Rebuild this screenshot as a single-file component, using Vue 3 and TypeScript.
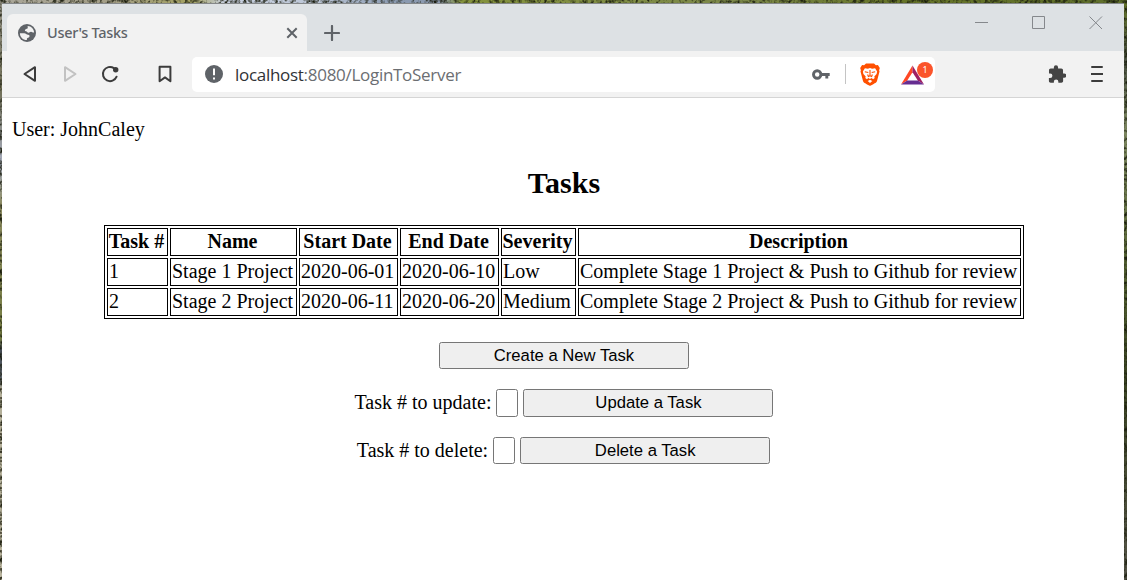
<script setup lang="ts">
interface Task {
  id: number
  name: string
  start: string
  end: string
  severity: string
  description: string
}

const headers: string[] = ['Task #', 'Name', 'Start Date', 'End Date', 'Severity', 'Description']

const tasks: Task[] = [
  { id: 1, name: 'Stage 1 Project', start: '2020-06-01', end: '2020-06-10', severity: 'Low', description: 'Complete Stage 1 Project & Push to Github for review' },
  { id: 2, name: 'Stage 2 Project', start: '2020-06-11', end: '2020-06-20', severity: 'Medium', description: 'Complete Stage 2 Project & Push to Github for review' },
]
</script>

<template>
  <div class="desktop">
    <svg class="wallpaper" width="1127" height="580" aria-hidden="true">
      <defs>
        <linearGradient id="top-tone" x1="0" y1="0" x2="1" y2="0">
          <stop offset="0" stop-color="#a9a69a" />
          <stop offset="0.1" stop-color="#a39e86" />
          <stop offset="0.17" stop-color="#a3a162" />
          <stop offset="0.2" stop-color="#c8d0df" />
          <stop offset="0.28" stop-color="#bcc6d6" />
          <stop offset="0.35" stop-color="#8999b0" />
          <stop offset="0.39" stop-color="#8c9ab0" />
          <stop offset="0.41" stop-color="#84923c" />
          <stop offset="0.65" stop-color="#7c884a" />
          <stop offset="0.8" stop-color="#667428" />
          <stop offset="1" stop-color="#5e6e2c" />
        </linearGradient>
        <linearGradient id="left-tone" x1="0" y1="0" x2="0" y2="1">
          <stop offset="0" stop-color="#98968a" />
          <stop offset="0.15" stop-color="#6f6e56" />
          <stop offset="0.28" stop-color="#a8aebf" />
          <stop offset="0.35" stop-color="#8b8a60" />
          <stop offset="0.58" stop-color="#757d42" />
          <stop offset="0.6" stop-color="#464d56" />
          <stop offset="0.65" stop-color="#596068" />
          <stop offset="0.67" stop-color="#b2ae98" />
          <stop offset="1" stop-color="#bab59f" />
        </linearGradient>
        <linearGradient id="right-tone" x1="0" y1="0" x2="0" y2="1">
          <stop offset="0" stop-color="#607028" />
          <stop offset="0.1" stop-color="#4b5244" />
          <stop offset="0.22" stop-color="#7d8761" />
          <stop offset="0.45" stop-color="#566434" />
          <stop offset="0.65" stop-color="#3a4422" />
          <stop offset="1" stop-color="#545348" />
        </linearGradient>
        <filter id="grain" x="0" y="0" width="1127" height="580" filterUnits="userSpaceOnUse" color-interpolation-filters="sRGB">
          <feTurbulence type="fractalNoise" baseFrequency="0.32 0.28" numOctaves="2" seed="8" />
          <feColorMatrix values="0 0 0 0 0.1  0 0 0 0 0.11  0 0 0 0 0.05  2.6 0 0 0 -1.1" />
        </filter>
      </defs>
      <rect width="1127" height="4" fill="url(#top-tone)" />
      <rect y="3" width="3" height="577" fill="url(#left-tone)" />
      <rect x="1123" y="3" width="4" height="577" fill="url(#right-tone)" />
      <path d="M1 388V580" stroke="#5f5b49" stroke-width="2" stroke-dasharray="2 7" />
      <rect width="1127" height="580" filter="url(#grain)" />
    </svg>

    <div class="window">
      <header class="titlebar">
        <div class="tab">
          <svg class="globe" viewBox="0 0 18 18">
            <circle cx="9" cy="9" r="9" fill="#5f6368" />
            <path d="M9.800 2C13.300 2.100 16 5.200 16.100 8.500c-1.300.2-2-.6-3-.7-1.300-.1-1.500 1.200-2.700 1-1.300-.2-1.100-1.600-2.500-1.600-1.100 0-1.300-1.200-.5-1.800.8-.7 2.200-.3 2.400-1.300.1-.8-.5-1.200 0-2.100z" fill="#f2f2f2" />
            <path d="M1.900 9.200h4.300c1.700 0 2.300 1.500 3.800 1.600 1.500 0 2 1.100 1.300 2.100-.6.900-1.900.4-2.300 1.500-.3.8.2 1.200-.2 1.700C4.900 16.100 1.900 12.900 1.900 9.200z" fill="#f2f2f2" />
          </svg>
          <span class="tab-title">User's Tasks</span>
          <svg class="tab-close" viewBox="0 0 12 12"><path d="M1.300 1.300l9.400 9.400M10.700 1.300l-9.400 9.400" /></svg>
        </div>
        <svg class="new-tab" viewBox="0 0 16 16"><path d="M8 1v14M1 8h14" /></svg>
        <div class="controls">
          <svg viewBox="0 0 14 14"><path d="M0 7.500h13" /></svg>
          <svg viewBox="0 0 14 14"><path d="M.5 1.500h12v12H.5z" /></svg>
          <svg viewBox="0 0 14 14"><path d="M.5 1.500l12.500 12.500M13 1.500L.5 14" /></svg>
        </div>
      </header>

      <nav class="toolbar">
        <svg class="back" viewBox="0 0 14 18"><path d="M12 2.200v13.600L1.500 9z" /></svg>
        <svg class="forward" viewBox="0 0 14 18"><path d="M2 2.200v13.600L12.500 9z" /></svg>
        <svg class="reload" viewBox="0 0 18 18">
          <path d="M15.600 11.700A7.100 7.100 0 1 1 12.900 3.100" />
          <circle cx="14.700" cy="4.700" r="2.700" />
        </svg>
        <svg class="bookmark" viewBox="0 0 14 18"><path d="M1.600 1.800h10.800v14.400L7 12.400l-5.400 3.800z" /></svg>

        <div class="address">
          <svg class="info" viewBox="0 0 18 18">
            <circle cx="9" cy="9" r="9" fill="#5f6368" />
            <path d="M9 3.600v6.600M9 12.600v2" stroke="#fff" stroke-width="2" />
          </svg>
          <span class="url"><b>localhost</b>:8080/LoginToServer</span>
          <svg class="key" viewBox="0 0 18 11">
            <circle cx="5.200" cy="5.500" r="3.700" />
            <path d="M8.700 5.500h9M14.800 5.500v4" />
          </svg>
          <i class="divider"></i>
          <svg class="lion" viewBox="0 0 20 23">
            <path d="M6 .5h8l1.900 1.700 2-.1L19.800 5l-.7 2.200.4 1.300-2.500 9.500c-.5 1.500-1.500 2-6.200 4.500q-.8.500-1.600 0C4.500 20 3.500 19.500 3 18L.5 8.500l.4-1.300L.2 5l1.900-2.900 2 .1z" fill="#ff5000" />
            <path d="M4.900 5.200l3 .5L10 5l2.100.7 3-.5 2 3.200-.5 2.600-2.300 2.500.4 1.400-1.600 1.300-1.500-1.300L10 16l-1.600-1.100-1.500 1.300-1.600-1.300.4-1.400L3.400 11l-.5-2.600z" fill="#fff" />
            <path d="M4.800 8.700l3.500.8M15.200 8.700l-3.500.8M10 7v5.500M7.600 11.500l.8 2L10 12.700l1.600.8.8-2" fill="none" stroke="#ff5000" stroke-width="1.100" />
            <path d="M10 16.800l2.300 1.300L10 20l-2.300-1.900z" fill="#fff" />
          </svg>
          <div class="rewards">
            <svg viewBox="0 0 24 20">
              <path d="M12 0v7.200L6.500 15.800 0 20z" fill="#ff4724" />
              <path d="M12 0l12 20-6.500-4.200L12 7.200z" fill="#9e1f63" />
              <path d="M0 20l6.500-4.200h11L24 20z" fill="#662d91" />
            </svg>
            <span class="badge">1</span>
          </div>
        </div>

        <svg class="puzzle" viewBox="0 0 20 20">
          <path d="M18 9.500h-1.300V5.900c0-1-.8-1.900-1.900-1.900h-3.600V2.700a2.300 2.300 0 0 0-4.700 0V4H3C2 4 1.100 4.900 1.100 5.900v3.500h1.300a2.500 2.500 0 0 1 0 5H1v3.500c0 1 .9 1.900 2 1.900h3.500v-1.300a2.500 2.500 0 0 1 5 0v1.300h3.400c1 0 1.900-.8 1.900-1.900v-3.700H18a2.300 2.300 0 0 0 0-4.700z" />
        </svg>
        <svg class="menu" viewBox="0 0 12 16"><path d="M1 1h10M0.500 8h11M1 15h10" /></svg>
      </nav>

      <main class="page">
        <p class="user">User: JohnCaley</p>
        <h2>Tasks</h2>
        <table>
          <colgroup><col class="c1" /><col class="c2" /><col class="c3" /><col class="c3" /><col class="c5" /><col class="c6" /></colgroup>
          <thead>
            <tr><th v-for="h in headers" :key="h">{{ h }}</th></tr>
          </thead>
          <tbody>
            <tr v-for="t in tasks" :key="t.id">
              <td>{{ t.id }}</td>
              <td>{{ t.name }}</td>
              <td>{{ t.start }}</td>
              <td>{{ t.end }}</td>
              <td>{{ t.severity }}</td>
              <td>{{ t.description }}</td>
            </tr>
          </tbody>
        </table>
        <div class="row create"><button>Create a New Task</button></div>
        <div class="row update"><label for="upd">Task # to update:</label><input id="upd" type="text" /><button>Update a Task</button></div>
        <div class="row delete"><label for="del">Task # to delete:</label><input id="del" type="text" /><button>Delete a Task</button></div>
      </main>
    </div>
  </div>
</template>

<style>
body { margin: 0; overflow: hidden; }
</style>

<style scoped>
* { box-sizing: border-box; }
.desktop { position: relative; width: 1127px; height: 580px; padding: 3px 3px 0 2px; overflow: hidden; }
.wallpaper { position: absolute; inset: 0; }
.window { position: relative; height: 577px; display: flex; flex-direction: column; background: #fff; border-top: 1px solid #85888a; }
svg { display: block; flex: none; fill: none; }

.titlebar { height: 47px; background: #dde1e4; display: flex; align-items: flex-start; padding-left: 5px; }
.tab { width: 300px; height: 37px; margin-top: 10px; padding: 0 9px 0 11px; border-radius: 6px 6px 0 0; background: #f2f2f2; display: flex; align-items: center; }
.globe { width: 18px; height: 18px; }
.tab-title { margin: -1px 0 0 11px; font: 500 14.500px/20px "Noto Sans", sans-serif; letter-spacing: -0.290px; color: #5f6368; white-space: nowrap; }
.tab-close { width: 12px; height: 12px; margin-left: auto; stroke: #5f6368; stroke-width: 2; }
.new-tab { width: 16px; height: 16px; margin: 21px 0 0 17px; stroke: #5f6368; stroke-width: 2.200; stroke-linecap: round; }
.controls { margin: 11px 21px 0 auto; display: flex; gap: 43px; }
.controls svg { width: 14px; height: 14px; stroke: #85888c; stroke-width: 1; overflow: visible; }

.toolbar { height: 47px; background: #f2f2f2; border-bottom: 1px solid #d5d5d5; display: flex; align-items: center; padding-left: 21px; }
.toolbar > svg { stroke: #3c3c3c; stroke-width: 2; stroke-linejoin: round; stroke-linecap: round; }
.back { width: 14px; height: 18px; }
.toolbar > .forward { width: 14px; height: 18px; margin-left: 26px; stroke: #c2c2c2; }
.reload { width: 18px; height: 18px; margin-left: 24px; }
.reload circle { fill: #3c3c3c; stroke: none; }
.bookmark { width: 14px; height: 18px; margin-left: 39px; }
.address { width: 743px; height: 35px; margin-left: 20px; padding: 0 3px 0 13px; border-radius: 5px; background: #fff; display: flex; align-items: center; }
.info { width: 18px; height: 18px; }
.url { margin: 2px 0 0 12px; font: 17px/24px "Open Sans", sans-serif; letter-spacing: -0.290px; color: #6b6e72; white-space: nowrap; }
.url b { font-weight: 400; color: #303236; }
.key { width: 18px; height: 11px; margin-left: auto; stroke: #5f6368; stroke-width: 2.900; }
.divider { width: 1px; height: 20px; margin-left: 15px; background: #c4c4c4; }
.lion { width: 20px; height: 23px; margin: 1px 0 0 14px; }
.rewards { position: relative; width: 31px; height: 23px; margin-left: 21px; padding-top: 2px; }
.rewards svg { width: 23px; height: 20px; }
.badge { position: absolute; left: 16px; top: -1px; width: 16px; height: 16px; border-radius: 50%; background: #fb542b; color: #fff; font: 9px/16px "Noto Sans", sans-serif; text-align: center; }
.toolbar > .puzzle { width: 18px; height: 18px; margin-left: 113px; fill: #444; stroke: none; }
.menu { width: 12px; height: 16px; margin-left: 25px; }

.page { flex: 1; display: flex; flex-direction: column; align-items: center; padding-left: 2px; color: #000; font: 20px/24px "Liberation Serif", "Times New Roman", serif; }
.user { align-self: flex-start; margin: 19px 0 0 8px; }
h2 { margin: 25px 0 0; font-size: 30px; line-height: 34px; font-weight: 700; }
table { width: 920px; height: 94px; margin-top: 25px; table-layout: fixed; border: 1px solid #000; border-collapse: separate; border-spacing: 2px; }
.c1 { width: 61px; } .c2 { width: 127px; } .c3 { width: 99px; } .c5 { width: 75px; } .c6 { width: 443px; }
th, td { height: 28px; padding: 0 1px 2px; border: 1px solid #000; line-height: 24px; white-space: nowrap; }
th { padding-right: 2px; padding-left: 0; }
td { text-align: left; }
.row { display: flex; align-items: center; }
.create { margin-top: 23px; }
.update { margin-top: 20px; }
.delete { margin: 20px 1px 0 0; }
label { white-space: nowrap; margin-right: 5px; padding-bottom: 2px; }
input { width: 22px; height: 28px; margin: 0 5px 0 0; padding: 1px; border: 1px solid #767676; border-radius: 2.500px; background: #fff; }
button { width: 250px; height: 27px; padding: 0; border: 1px solid #767676; border-radius: 2.500px; background: #efefef; color: #000; font: 16.667px/22px "Liberation Sans", Arial, sans-serif; }
.update button { height: 28px; }
.delete input { height: 27px; }
</style>
